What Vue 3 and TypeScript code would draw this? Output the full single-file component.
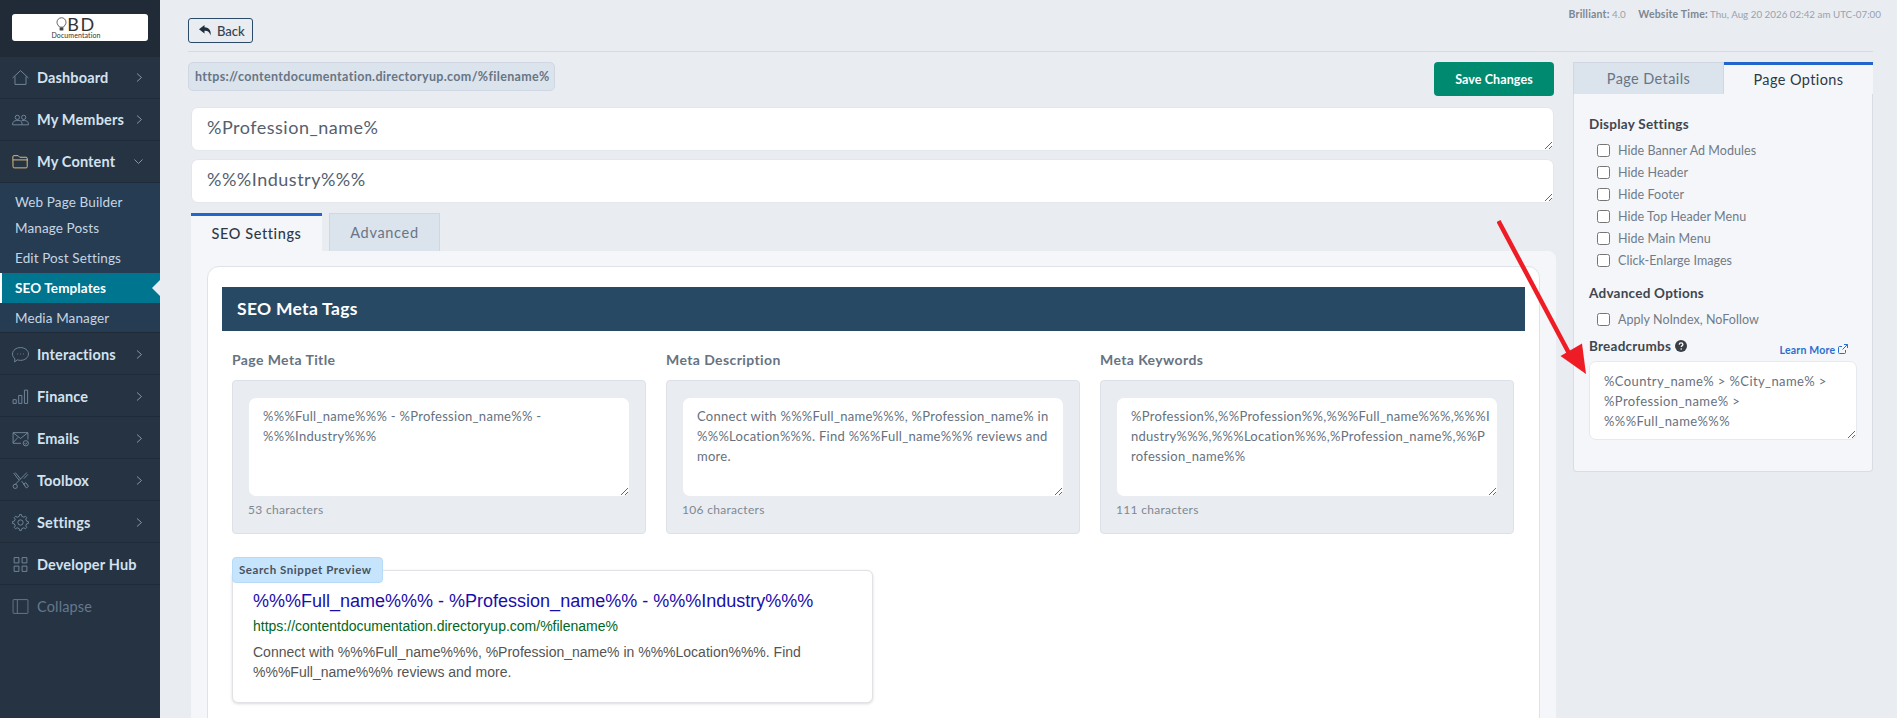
<template>
  <div class="app">
    <aside class="sidebar">
      <div class="logo-wrap">
        <div class="logo">
          <div class="logo-row">
            <svg class="bulb" width="11" height="15" viewBox="0 0 14 20">
              <path d="M4.500 13.500C3 11.500 1 10 1 7a6 6 0 0 1 12 0c0 3-2 4.500-3.500 6.500z" fill="none" stroke="#333" stroke-width="1" />
              <path d="M4.500 14h5v4h-5z" fill="#444" />
            </svg>
            <span class="logo-bd">BD</span>
          </div>
          <span class="logo-doc">Documentation</span>
        </div>
      </div>

      <a v-for="item in navTop" :key="item.label" class="nav-item">
        <svg class="nav-icon" width="17" height="17" viewBox="0 0 16 16" fill="none" :stroke="item.color || '#75879b'" stroke-width="0.9">
          <path :d="item.icon" />
        </svg>
        <span class="nav-label">{{ item.label }}</span>
        <svg v-if="item.open" class="chev" width="9" height="9" viewBox="0 0 9 9"><path d="M.5 2.500L4.500 6.500l4-4" /></svg>
        <svg v-else class="chev" width="9" height="9" viewBox="0 0 9 9"><path d="M3 .5L7.500 4.500 3 8.500" /></svg>
      </a>

      <div class="submenu">
        <a v-for="sub in subItems" :key="sub.label" class="sub-item" :class="{ active: sub.active }">{{ sub.label }}</a>
      </div>

      <a v-for="item in navBottom" :key="item.label" class="nav-item">
        <svg class="nav-icon" width="17" height="17" viewBox="0 0 16 16" fill="none" stroke="#75879b" stroke-width="0.9">
          <path :d="item.icon" />
        </svg>
        <span class="nav-label">{{ item.label }}</span>
        <svg v-if="item.arrow" class="chev" width="9" height="9" viewBox="0 0 9 9"><path d="M3 .5L7.500 4.500 3 8.500" /></svg>
      </a>

      <a class="nav-item collapse">
        <svg class="nav-icon" width="17" height="17" viewBox="0 0 16 16" fill="none" stroke="#66788c" stroke-width="0.9">
          <path d="M1.500 1.500h13a.5.5 0 0 1 .5.5v12a.5.5 0 0 1-.5.5h-13A.5.5 0 0 1 1 14V2a.5.5 0 0 1 .5-.5zM5 1.500v13" />
        </svg>
        <span class="nav-label">Collapse</span>
      </a>
    </aside>

    <main class="main">
      <header class="topbar">
        <button class="back-btn">
          <svg width="13" height="11" viewBox="0 0 13 11"><path d="M5.500 0L0 4.300 5.500 8.600V5.800c3.500 0 5 1.200 6 4.700.9-4.500-1.200-8-6-8.200z" fill="#1f2d3d" /></svg>
          Back
        </button>
        <div class="site-meta">
          <b>Brilliant:</b> 4.0 <b class="time-label">Website Time:</b> Thu, Aug 20 2026 02:42 am UTC-07:00
        </div>
      </header>

      <div class="columns">
        <section class="left">
          <div class="url-row">
            <div class="url-pill">https://contentdocumentation.directoryup.com/%filename%</div>
            <button class="save-btn">Save Changes</button>
          </div>

          <textarea class="big-input first" readonly :value="pageName"></textarea>
          <textarea class="big-input" readonly :value="pageSub"></textarea>

          <div class="tabs">
            <div class="tab active">SEO Settings</div>
            <div class="tab">Advanced</div>
          </div>

          <div class="tab-panel">
            <div class="card">
              <h2 class="band">SEO Meta Tags</h2>

              <div class="meta-grid">
                <div v-for="field in metaFields" :key="field.label" class="meta-col">
                  <label class="meta-label">{{ field.label }}</label>
                  <div class="meta-box">
                    <textarea class="meta-text" readonly wrap="off" :value="field.value"></textarea>
                    <div class="count">{{ field.count }} characters</div>
                  </div>
                </div>
              </div>

              <div class="snippet">
                <span class="snippet-tag">Search Snippet Preview</span>
                <div class="snippet-title">%%%Full_name%%% - %Profession_name%% - %%%Industry%%%</div>
                <div class="snippet-url">https://contentdocumentation.directoryup.com/%filename%</div>
                <div class="snippet-desc">Connect with %%%Full_name%%%, %Profession_name% in %%%Location%%%. Find<br />%%%Full_name%%% reviews and more.</div>
              </div>
            </div>
          </div>
        </section>

        <section class="right">
          <div class="side-tabs">
            <div class="side-tab">Page Details</div>
            <div class="side-tab active">Page Options</div>
          </div>
          <div class="side-panel">
            <h3 class="side-title">Display Settings</h3>
            <label v-for="opt in displayOptions" :key="opt" class="check-row">
              <span class="box"></span>{{ opt }}
            </label>

            <h3 class="side-title advanced">Advanced Options</h3>
            <label class="check-row">
              <span class="box"></span>Apply NoIndex, NoFollow
            </label>

            <div class="crumb-head">
              <h3 class="side-title crumb-title">
                Breadcrumbs
                <svg width="12" height="12" viewBox="0 0 12 12"><circle cx="6" cy="6" r="6" fill="#3a3f46" /><path d="M4.200 4.600c.1-1.100.9-1.700 1.900-1.700s1.800.6 1.800 1.500c0 1.300-1.600 1.300-1.600 2.500" fill="none" stroke="#fff" stroke-width="1.300" /><circle cx="6.200" cy="9" r=".8" fill="#fff" /></svg>
              </h3>
              <a class="learn">
                Learn More
                <svg width="10" height="10" viewBox="0 0 10 10" fill="none" stroke="#2a6fd0" stroke-width="1"><path d="M7.500 6v2.500a1 1 0 0 1-1 1h-5a1 1 0 0 1-1-1v-5a1 1 0 0 1 1-1H4M6 .5h3.500V4M9.500.5L4.500 5.500" /></svg>
              </a>
            </div>
            <textarea class="crumb-text" readonly :value="breadcrumbs"></textarea>
          </div>
        </section>
      </div>
    </main>

    <!-- red annotation arrow drawn over the screenshot -->
    <svg class="arrow" width="120" height="180" viewBox="0 0 120 180">
      <path d="M1.500 2L74 138" stroke="#ee1c25" stroke-width="4.500" fill="none" />
      <path d="M89 155L63.500 137 85 124.500z" fill="#ee1c25" />
    </svg>
  </div>
</template>

<script setup lang="ts">
interface NavItem {
  label: string
  icon: string
  color?: string
  open?: boolean
  arrow?: boolean
}

// gear outline, 8 teeth
function gearPath(): string {
  const pts: string[] = []
  const teeth = 8
  for (let i = 0; i < teeth; i++) {
    const a = (i / teeth) * Math.PI * 2
    const step = Math.PI / teeth
    const list: [number, number][] = [
      [5.9, a - step * 0.55],
      [7.5, a - step * 0.3],
      [7.5, a + step * 0.3],
      [5.9, a + step * 0.55],
    ]
    for (const [r, t] of list) {
      pts.push(`${(8 + r * Math.cos(t)).toFixed(2)} ${(8 + r * Math.sin(t)).toFixed(2)}`)
    }
  }
  return 'M' + pts.join('L') + 'zM10.500 8a2.500 2.500 0 1 1-5 0 2.500 2.500 0 0 1 5 0z'
}

const navTop: NavItem[] = [
  { label: 'Dashboard', icon: 'M.5 8.500L8 1.500l7.500 7M2.800 7v7.500h10.400V7' },
  { label: 'My Members', icon: 'M3 6a2 2 0 1 0 4 0 2 2 0 0 0-4 0zM9 6a2 2 0 1 0 4 0 2 2 0 0 0-4 0zM.5 13c0-3 1.500-4 4-4h2c2.500 0 3 1.500 3 4zM9.500 13h6c0-3-1.500-4-4-4H9' },
  { label: 'My Content', icon: 'M.8 5V3.500a1 1 0 0 1 1-1h4l1.500 1.500h6a1 1 0 0 1 1 1v8a1 1 0 0 1-1 1H2a1 1 0 0 1-1-1zM1 6.500h14', color: '#e3c27c', open: true },
]

const subItems = [
  { label: 'Web Page Builder' },
  { label: 'Manage Posts' },
  { label: 'Edit Post Settings' },
  { label: 'SEO Templates', active: true },
  { label: 'Media Manager' },
]

const navBottom: NavItem[] = [
  { label: 'Interactions', icon: 'M8 1.500c4 0 7.500 2.500 7.500 6s-3.500 6-7.500 6c-1 0-2-.2-3-.5l-2.500 2 .2-3C1.300 11 .5 9.300.5 7.500c0-3.500 3.500-6 7.500-6zM5 7.500h.8M7.700 7.500h.8M10.400 7.500h.8', arrow: true },
  { label: 'Finance', icon: 'M1 11h3v3.500H1zM6.300 7h3v7.500h-3zM11.700 2h3v12.500h-3z', arrow: true },
  { label: 'Emails', icon: 'M8.500 12.500H1V2.500h14V9M1 2.500l7 5.500 7-5.500M1 12l4.500-5M15.500 12.500a2.500 2.500 0 1 1-5 0 2.500 2.500 0 0 1 5 0zM11.800 12.500l1 1 1.400-1.800', arrow: true },
  { label: 'Toolbox', icon: 'M1.500 1l5 6.500M3 .5l5 6M9 8.500l3 4M14 .5L2.700 12M5 13.500a2 2 0 1 1-4 0 2 2 0 0 1 4 0zM11 11.500l2-1.500 2.500 3.500-2 1.500zM15 2.200l-3.800 4', arrow: true },
  { label: 'Settings', icon: gearPath(), arrow: true },
  { label: 'Developer Hub', icon: 'M2 1.500h4.500v5H2zM9.500 1.500H14v5H9.500zM2 9.500h4.500v5H2zM9.500 9.500H14v5H9.500z' },
]

const pageName = '%Profession_name%'
const pageSub = '%%%Industry%%%'

const metaFields = [
  {
    label: 'Page Meta Title',
    value: '%%%Full_name%%% - %Profession_name%% -\n%%%Industry%%%',
    count: 53,
  },
  {
    label: 'Meta Description',
    value: 'Connect with %%%Full_name%%%, %Profession_name% in\n%%%Location%%%. Find %%%Full_name%%% reviews and\nmore.',
    count: 106,
  },
  {
    label: 'Meta Keywords',
    value: '%Profession%,%%Profession%%,%%%Full_name%%%,%%%I\nndustry%%%,%%%Location%%%,%Profession_name%,%%P\nrofession_name%%',
    count: 111,
  },
]

const displayOptions = [
  'Hide Banner Ad Modules',
  'Hide Header',
  'Hide Footer',
  'Hide Top Header Menu',
  'Hide Main Menu',
  'Click-Enlarge Images',
]

const breadcrumbs = '%Country_name% > %City_name% >\n%Profession_name% >\n%%%Full_name%%%'
</script>

<style>
html,
body {
  margin: 0;
  height: 718px;
  overflow: hidden;
  background: #e9ecf1;
}
</style>

<style scoped>
* {
  box-sizing: border-box;
}

.app {
  position: relative;
  display: flex;
  height: 718px;
  overflow: hidden;
  font-family: "Lato", "Open Sans", sans-serif;
  color: #4f5b69;
}

/* sidebar */
.sidebar {
  flex: none;
  width: 160px;
  background: #253343;
}

.logo-wrap {
  height: 57px;
  padding: 14px 12px 0;
  background: #212b38;
}

.logo {
  display: flex;
  flex-direction: column;
  align-items: center;
  height: 27px;
  padding: 3px 8px 0 0;
  background: #fff;
  border-radius: 3px;
}

.logo-row {
  display: flex;
  align-items: center;
  height: 15px;
}

.logo-bd {
  font-size: 18px;
  line-height: 15px;
  letter-spacing: 1.500px;
  color: #333;
}

.logo-doc {
  font-size: 7px;
  line-height: 6px;
  letter-spacing: 0.1px;
  color: #333;
}

.nav-item {
  display: flex;
  align-items: center;
  height: 42px;
  padding: 0 12px;
  border-bottom: 1px solid #1f2b39;
  color: #d3e2ee;
  font-size: 14.500px;
  font-weight: 700;
  letter-spacing: 0.15px;
}

.submenu ~ .nav-item {
  padding-top: 1px;
}

.nav-icon {
  flex: none;
  margin-right: 8px;
}

.nav-label {
  flex: 1;
}

.chev {
  flex: none;
  margin-right: 5px;
  fill: none;
  stroke: #8596a8;
  stroke-width: 1;
}

.collapse {
  border-bottom: 0;
  color: #66788c;
  font-weight: 400;
}

.submenu {
  height: 150px;
  background: #263c53;
  border-bottom: 1px solid #1f2b39;
}

.sub-item {
  position: relative;
  display: flex;
  align-items: center;
  height: 30px;
  padding-left: 15px;
  font-size: 13.500px;
  letter-spacing: 0.12px;
  color: #c6d5e2;
}

.sub-item:nth-child(1) {
  height: 32px;
  padding-top: 6px;
}

.sub-item:nth-child(2) {
  height: 28px;
  padding-bottom: 2px;
}

.sub-item.active {
  border-left: 2px solid #fff;
  padding-left: 13px;
  background: #00758f;
  color: #fff;
  font-weight: 700;
}

.sub-item.active::after {
  content: "";
  position: absolute;
  top: 7px;
  right: 0;
  border: 8px solid transparent;
  border-left: 0;
  border-right-color: #e9ecf1;
}

/* main */
.main {
  flex: 1;
  min-width: 0;
  padding: 0 24px 0 28px;
}

.topbar {
  display: flex;
  justify-content: space-between;
  height: 52px;
  padding-top: 18px;
  border-bottom: 1px solid #d6dbe1;
}

.back-btn {
  display: flex;
  align-items: center;
  gap: 5px;
  width: 65px;
  height: 25px;
  padding: 0 0 0 10px;
  background: transparent;
  border: 1px solid #2a4a68;
  border-radius: 3px;
  font: 500 13px "Lato", sans-serif;
  color: #33414f;
}

.site-meta {
  margin: -10px -8px 0 0;
  font-size: 9.800px;
  line-height: 13px;
  color: #98a2ad;
}

.site-meta b {
  font-size: 10.500px;
  letter-spacing: 0.2px;
  color: #7d8792;
}

.time-label {
  margin-left: 10px;
}

.columns {
  display: grid;
  grid-template-columns: 1368px 300px;
  gap: 17px;
  margin-top: 10px;
}

.url-row {
  display: flex;
  justify-content: space-between;
  align-items: flex-start;
  height: 34px;
  padding-right: 2px;
}

.url-pill {
  width: 367px;
  height: 29px;
  padding-left: 6px;
  background: #dbe3ec;
  border: 1px solid #cfd8e2;
  border-radius: 5px;
  font-size: 12.500px;
  font-weight: 700;
  line-height: 27px;
  letter-spacing: 0.34px;
  color: #677585;
  white-space: nowrap;
}

.save-btn {
  width: 120px;
  height: 34px;
  background: #008a70;
  border: 0;
  border-radius: 4px;
  font: 700 12.500px "Lato", sans-serif;
  letter-spacing: 0.1px;
  color: #fff;
}

.big-input {
  display: block;
  width: 1363px;
  height: 44px;
  margin: 8px 2px 0 3px;
  padding: 7px 15px;
  background: #fff;
  border: 1px solid #e3e7ec;
  border-radius: 7px;
  font: 18px/24px "Lato", sans-serif;
  letter-spacing: 0.5px;
  color: #55606d;
  outline: none;
}

.big-input.first {
  margin-top: 11px;
}

.tabs {
  display: flex;
  gap: 7px;
  margin: 10px 0 0 3px;
}

.tab {
  display: flex;
  align-items: center;
  justify-content: center;
  width: 111px;
  height: 38px;
  background: #dbe3ec;
  border: 1px solid #cfd8e2;
  border-bottom: 0;
  font-size: 14.500px;
  letter-spacing: 0.7px;
  color: #677585;
}

.tab.active {
  width: 131px;
  background: #f4f6fa;
  border: 0;
  border-top: 3px solid #2266cc;
  font-weight: 500;
  letter-spacing: 0.6px;
  color: #2f3944;
}

.tab-panel {
  height: 480px;
  margin: 0 0 0 3px;
  padding: 15px 16px;
  background: #f4f6fa;
  border-radius: 0 8px 0 0;
}

.card {
  height: 500px;
  padding: 20px 14px;
  background: #fff;
  border: 1px solid #dfe3e9;
  border-radius: 12px;
}

.band {
  height: 44px;
  margin: 0;
  padding-left: 15px;
  background: #274964;
  font-size: 17.500px;
  font-weight: 700;
  line-height: 44px;
  letter-spacing: 0.3px;
  color: #fff;
}

.meta-grid {
  display: grid;
  grid-template-columns: repeat(3, 414px);
  gap: 20px;
  margin: 19px 10px 0;
}

.meta-label {
  display: block;
  height: 30px;
  font-size: 14px;
  font-weight: 700;
  line-height: 20px;
  letter-spacing: 0.4px;
  color: #677280;
}

.meta-box {
  height: 154px;
  padding: 17px 16px 0;
  background: #e9ecf1;
  border: 1px solid #dde1e7;
  border-radius: 4px;
}

.meta-text {
  display: block;
  width: 100%;
  height: 98px;
  padding: 8px 12px 8px 14px;
  background: #fff;
  border: 0;
  border-radius: 7px;
  font: 13px/20px "Lato", sans-serif;
  letter-spacing: 0.28px;
  color: #66717e;
  outline: none;
  overflow: hidden;
}

.count {
  margin: 6px 0 0 -1px;
  font-size: 12px;
  line-height: 15px;
  letter-spacing: 0.3px;
  color: #7f8892;
}

.snippet {
  position: relative;
  width: 641px;
  height: 133px;
  margin: 36px 0 0 10px;
  padding: 19px 20px 0;
  background: #fff;
  border: 1px solid #e0e2e6;
  border-radius: 6px;
  box-shadow: 0 1px 3px rgba(0, 0, 0, 0.15);
  font-family: "Liberation Sans", Arial, sans-serif;
}

.snippet-tag {
  position: absolute;
  top: -14px;
  left: -1px;
  width: 151px;
  height: 26px;
  padding-left: 6px;
  background: #c6e4fc;
  border: 1px solid #b7daf6;
  border-radius: 4px;
  font: 700 11.500px/24px "Lato", sans-serif;
  letter-spacing: 0.55px;
  color: #45525f;
}

.snippet-title {
  font-size: 18px;
  line-height: 22px;
  color: #1a0dab;
}

.snippet-url {
  margin-top: 4px;
  font-size: 14px;
  line-height: 20px;
  color: #006621;
}

.snippet-desc {
  margin-top: 6px;
  font-size: 14px;
  line-height: 20px;
  color: #545454;
}

/* right column */
.side-tabs {
  display: flex;
  height: 32px;
}

.side-tab {
  display: flex;
  flex: 1;
  align-items: center;
  justify-content: center;
  background: #dbe3ec;
  border: 1px solid #cfd8e2;
  border-bottom: 0;
  font-size: 14.500px;
  letter-spacing: 0.4px;
  color: #677585;
}

.side-tab.active {
  background: #f4f6fa;
  border: 0;
  border-top: 3px solid #2266cc;
  color: #2f3944;
}

.side-panel {
  height: 378px;
  padding: 20px 15px 0;
  background: #f4f6fa;
  border: 1px solid #d9dde3;
  border-top: 0;
  border-radius: 0 0 4px 4px;
}

.side-title {
  margin: 0;
  font-size: 13.500px;
  font-weight: 700;
  line-height: 20px;
  letter-spacing: 0.25px;
  color: #3f464f;
}

.advanced {
  margin-top: 12px;
}

.check-row {
  display: flex;
  align-items: center;
  height: 22px;
  padding-left: 8px;
  font-size: 12.500px;
  letter-spacing: 0.05px;
  color: #717b87;
}

.side-title + .check-row {
  margin-top: 5px;
}

.box {
  flex: none;
  width: 13px;
  height: 13px;
  margin-right: 8px;
  background: #fff;
  border: 1px solid #767676;
  border-radius: 2.500px;
}

.crumb-head {
  display: flex;
  justify-content: space-between;
  align-items: flex-start;
  height: 25px;
  margin-top: 6px;
  padding-right: 9px;
}

.crumb-title svg {
  vertical-align: -1px;
}

.learn {
  margin-top: 7px;
  font-size: 10.500px;
  font-weight: 700;
  line-height: 14px;
  letter-spacing: 0.2px;
  color: #2a6fd0;
}

.crumb-text {
  display: block;
  width: 268px;
  height: 79px;
  padding: 9px 14px;
  background: #fff;
  border: 1px solid #e6e9ee;
  border-radius: 7px;
  font: 13px/20px "Lato", sans-serif;
  letter-spacing: 0.4px;
  color: #66717e;
  outline: none;
  overflow: hidden;
}

.arrow {
  position: absolute;
  top: 219px;
  left: 1497px;
  pointer-events: none;
}
</style>
